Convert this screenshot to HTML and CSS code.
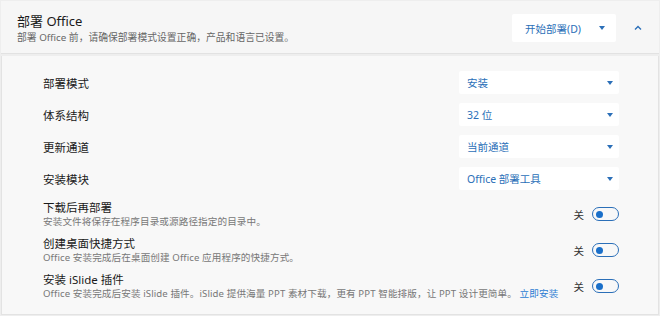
FILE: index.html
```html
<!DOCTYPE html>
<html lang="zh-CN">
<head>
<meta charset="utf-8">
<link rel="stylesheet" href="styles.css">
</head>
<body>
<div class="frame">
  <div class="header">
    <div class="head-text">
      <div class="title">部署 Office</div>
      <div class="subtitle">部署 Office 前，请确保部署模式设置正确，产品和语言已设置。</div>
    </div>
    <div class="split-btn">
      <span class="btn-label">开始部署(D)</span>
      <span class="caret"></span>
    </div>
    <svg class="chev" width="10" height="6" viewBox="0 0 10 6"><path d="M2 4.5 L5 1.5 L8 4.5" fill="none" stroke="#2b6fb8" stroke-width="1.4"/></svg>
  </div>
  <div class="body">
    <div class="select-row">
      <span class="label">部署模式</span>
      <div class="select"><span>安装</span><span class="caret"></span></div>
    </div>
    <div class="select-row">
      <span class="label">体系结构</span>
      <div class="select"><span>32 位</span><span class="caret"></span></div>
    </div>
    <div class="select-row">
      <span class="label">更新通道</span>
      <div class="select"><span>当前通道</span><span class="caret"></span></div>
    </div>
    <div class="select-row last">
      <span class="label">安装模块</span>
      <div class="select"><span>Office 部署工具</span><span class="caret"></span></div>
    </div>
    <div class="toggle-row">
      <div class="t-text">
        <div class="t-title">下载后再部署</div>
        <div class="t-desc">安装文件将保存在程序目录或源路径指定的目录中。</div>
      </div>
      <span class="state">关</span><span class="toggle"><span class="knob"></span></span>
    </div>
    <div class="toggle-row">
      <div class="t-text">
        <div class="t-title">创建桌面快捷方式</div>
        <div class="t-desc">Office 安装完成后在桌面创建 Office 应用程序的快捷方式。</div>
      </div>
      <span class="state">关</span><span class="toggle"><span class="knob"></span></span>
    </div>
    <div class="toggle-row">
      <div class="t-text">
        <div class="t-title">安装 iSlide 插件</div>
        <div class="t-desc">Office 安装完成后安装 iSlide 插件。iSlide 提供海量 PPT 素材下载，更有 PPT 智能排版，让 PPT 设计更简单。 <a class="link">立即安装</a></div>
      </div>
      <span class="state">关</span><span class="toggle"><span class="knob"></span></span>
    </div>
  </div>
</div>
</body>
</html>
```
FILE: styles.css
```css
html, body {
  margin: 0;
  padding: 0;
  background: #eeeeee;
  font-family: "Noto Sans", "Noto Sans CJK SC", sans-serif;
  color: #1b1b1b;
}
.frame {
  width: 658px;
  height: 314px;
  margin: 1px;
  display: flex;
  flex-direction: column;
  gap: 2px;
}
.header {
  height: 53px;
  background: #f6f6f6;
  border-bottom: 1px solid #e2e2e2;
  display: flex;
  align-items: center;
  padding: 0 16px 0 16px;
  box-sizing: border-box;
}
.head-text { flex: 1; margin-top: 2px; }
.title {
  font-size: 13px;
  line-height: 17px;
  color: #1a1a1a;
}
.subtitle {
  font-size: 9.8px;
  line-height: 13px;
  color: #666;
  margin-top: 1px;
}
.split-btn {
  width: 104px;
  height: 28px;
  background: #ffffff;
  border-radius: 2px;
  box-sizing: border-box;
  padding: 0 11px 0 13px;
  display: flex;
  align-items: center;
  justify-content: space-between;
  margin-top: 2px;
}
.btn-label {
  font-size: 10.5px;
  color: #2b6fb8;
}
.caret {
  width: 0;
  height: 0;
  border-left: 3.5px solid transparent;
  border-right: 3.5px solid transparent;
  border-top: 4px solid #2b6fb8;
}
.chev { margin-left: 17px; margin-top: 2px; }
.body {
  flex: 1;
  background: #f8f8f8;
  border: 1px solid #e3e3e3;
  border-top: none;
  padding: 15px 39px 0 41px;
  box-sizing: border-box;
}
.select-row {
  display: flex;
  align-items: center;
  justify-content: space-between;
  height: 23px;
  margin-bottom: 9px;
}
.select-row.last { margin-bottom: 6px; }
.label {
  font-size: 11.5px;
  color: #1a1a1a;
}
.select {
  width: 160px;
  height: 23px;
  background: #fff;
  border-radius: 2px;
  box-sizing: border-box;
  padding: 0 6px 0 8px;
  display: flex;
  align-items: center;
  justify-content: space-between;
  font-size: 10.5px;
  color: #2b6fb8;
}
.toggle-row {
  display: flex;
  align-items: center;
  height: 36px;
}
.t-text { flex: 1; }
.t-title {
  font-size: 11.5px;
  line-height: 15px;
  color: #1a1a1a;
}
.t-desc {
  font-size: 9.6px;
  line-height: 13px;
  letter-spacing: 0.1px;
  color: #777;
}
.link { color: #2b7cd3; }
.state {
  font-size: 10.5px;
  color: #333;
  margin-right: 8px;
}
.toggle {
  width: 27px;
  height: 14px;
  border: 1.5px solid #2b6fb8;
  border-radius: 9px;
  box-sizing: border-box;
  display: flex;
  align-items: center;
  padding-left: 3px;
}
.knob {
  width: 7px;
  height: 7px;
  border-radius: 50%;
  background: #1a6fc9;
}
```
